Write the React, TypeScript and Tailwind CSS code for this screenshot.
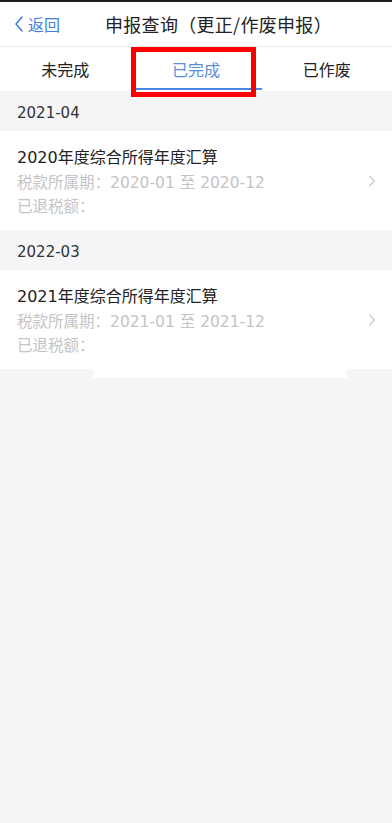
const FONT = { fontFamily: '"Noto Sans CJK SC", "Noto Sans", sans-serif' };
const LATIN = { fontFamily: '"DejaVu Sans", "Noto Sans CJK SC", sans-serif' };

const RECORDS = [
  { month: "2021-04", title: "2020年度综合所得年度汇算", period: "2020-01 至 2020-12" },
  { month: "2022-03", title: "2021年度综合所得年度汇算", period: "2021-01 至 2021-12" },
];

const TABS = ["未完成", "已完成", "已作废"];

function Chevron({ className }: { className?: string }) {
  return (
    <svg viewBox="0 0 10 16" className={className} fill="none" stroke="currentColor" strokeWidth="1.6" strokeLinecap="round" strokeLinejoin="round">
      <path d="M2 2l6 6-6 6" />
    </svg>
  );
}

export default function App() {
  return (
    <div className="relative w-[392px] h-[823px] bg-[#f5f5f7] overflow-hidden" style={FONT}>
      <div className="h-[2px] bg-[#1e1e1e]" />
      <div className="h-[45px] bg-white flex items-center border-b border-[#ececec] relative">
        <div className="flex items-center pl-[14px] text-[#3f80e0] text-[16px]">
          <svg viewBox="0 0 10 18" className="w-[10px] h-[18px] mr-[4px]" fill="none" stroke="currentColor" strokeWidth="1.6" strokeLinecap="round" strokeLinejoin="round">
            <path d="M8 2L2 9l6 7" />
          </svg>
          返回
        </div>
        <div className="absolute left-0 right-0 text-center text-[18px] tracking-[0.3px] text-[#222] pointer-events-none pl-[45px]">
          申报查询（更正/作废申报）
        </div>
      </div>
      <div className="h-[44px] bg-white grid grid-cols-3 text-[16px]">
        {TABS.map((t, i) => (
          <div key={t} className="relative flex items-center justify-center">
            <span className={i === 1 ? "text-[#5b8fdc]" : "text-[#222]"}>{t}</span>
            {i === 1 && <div className="absolute bottom-[1px] left-[4px] right-[-1px] h-[2px] bg-[#4a86e8]" />}
          </div>
        ))}
      </div>
      {RECORDS.map((r) => (
        <div key={r.month}>
          <div className="h-[40px] flex items-center pt-[4px] px-[17px] text-[15px] text-[#333]" style={LATIN}>{r.month}</div>
          <div className="bg-white h-[99px] flex items-center pl-[17px] pr-[16px]">
            <div className="flex-1 pt-[3px]" style={LATIN}>
              <div className="text-[16px] text-[#222] leading-[24px]">{r.title}</div>
              <div className="text-[15.5px] text-[#c4c4c4] leading-[24px] mt-[1px]">税款所属期：{r.period}</div>
              <div className="text-[15.5px] text-[#c4c4c4] leading-[24px]">已退税额：</div>
            </div>
            <Chevron className="w-[8px] h-[14px] text-[#c8c8c8]" />
          </div>
        </div>
      ))}
      <div className="ml-[93px] w-[254px] h-[9px] bg-white" />
      <div className="absolute left-[131px] top-[47px] w-[125px] h-[50px] border-[5px] border-[#ff0000]" />
    </div>
  );
}
